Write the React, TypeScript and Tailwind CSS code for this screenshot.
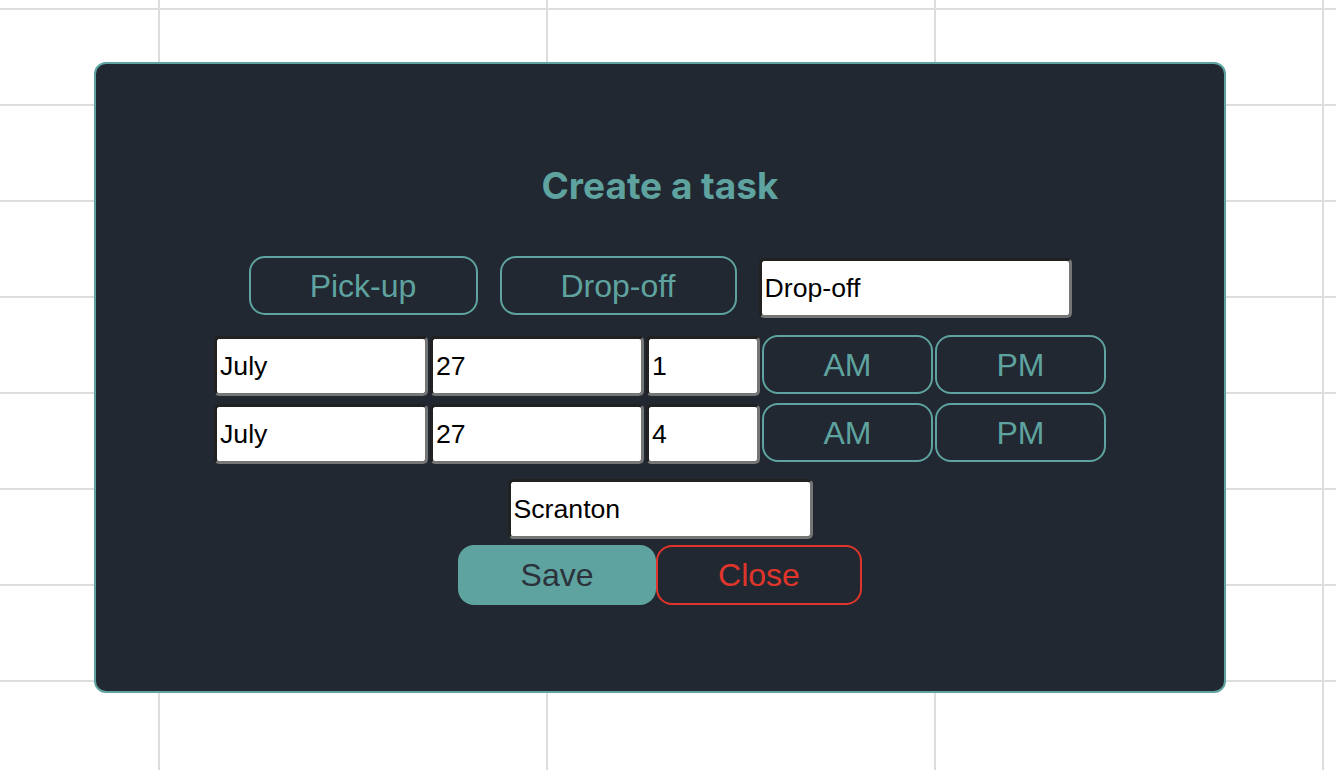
import React from 'react';

const inputCls =
  'h-[60px] bg-white text-black text-[26.67px] px-[3px] rounded-[5px] border-[3px] border-[#767676] [border-style:inset] outline-none font-["Liberation_Sans",Arial,sans-serif]';

const outlineBtn =
  'rounded-[16px] border-2 border-[#5ea39f] text-[#5ea39f] text-[32px] leading-none bg-transparent font-["Liberation_Sans",Arial,sans-serif]';

function BackgroundGrid() {
  const cells = Array.from({ length: 9 * 5 });
  return (
    <div className="grid grid-cols-[158px_386px_386px_386px_1fr] grid-rows-[8px_repeat(8,94px)] gap-[2px] bg-[#dddddd] h-full">
      {cells.map((_, i) => (
        <div key={i} className="bg-white" />
      ))}
    </div>
  );
}

function TimeRow({ month, day, hour }: { month: string; day: string; hour: string }) {
  return (
    <div className="flex items-start gap-[2px]">
      <input className={`${inputCls} w-[214px]`} defaultValue={month} />
      <input className={`${inputCls} w-[214px]`} defaultValue={day} />
      <input className={`${inputCls} w-[114px]`} defaultValue={hour} />
      <button className={`${outlineBtn} w-[171px] h-[59px] -mt-[1px]`}>AM</button>
      <button className={`${outlineBtn} w-[171px] h-[59px] -mt-[1px]`}>PM</button>
    </div>
  );
}

export default function App() {
  return (
    <div className="relative w-full h-[770px] overflow-hidden bg-white">
      <BackgroundGrid />
      <div className="absolute left-[94px] top-[62px] w-[1132px] h-[631px] rounded-[12px] border-2 border-[#5ea39f] bg-[#222831] flex flex-col items-center pt-[102px]">
        <h1 className='text-[37px] leading-[40px] font-bold text-[#5ea39f] font-["Inter",sans-serif]'>Create a task</h1>
        <div className="flex items-start gap-[22px] mt-[50px]">
          <button className={`${outlineBtn} w-[229px] h-[59px]`}>Pick-up</button>
          <button className={`${outlineBtn} w-[237px] h-[59px]`}>Drop-off</button>
          <input className={`${inputCls} w-[313px] h-[59px] mt-[2px]`} defaultValue="Drop-off" />
        </div>
        <div className="mt-[18px] flex flex-col gap-[8px]">
          <TimeRow month="July" day="27" hour="1" />
          <TimeRow month="July" day="27" hour="4" />
        </div>
        <input className={`${inputCls} w-[305px] mt-[15px]`} defaultValue="Scranton" />
        <div className="flex mt-[6px]">
          <button className='w-[198px] h-[60px] rounded-[16px] bg-[#5ea39f] text-[#2b323c] text-[32px] leading-none font-["Liberation_Sans",Arial,sans-serif]'>
            Save
          </button>
          <button className='w-[206px] h-[60px] rounded-[16px] border-2 border-[#e0352b] text-[#e0352b] text-[32px] leading-none font-["Liberation_Sans",Arial,sans-serif]'>
            Close
          </button>
        </div>
      </div>
    </div>
  );
}
